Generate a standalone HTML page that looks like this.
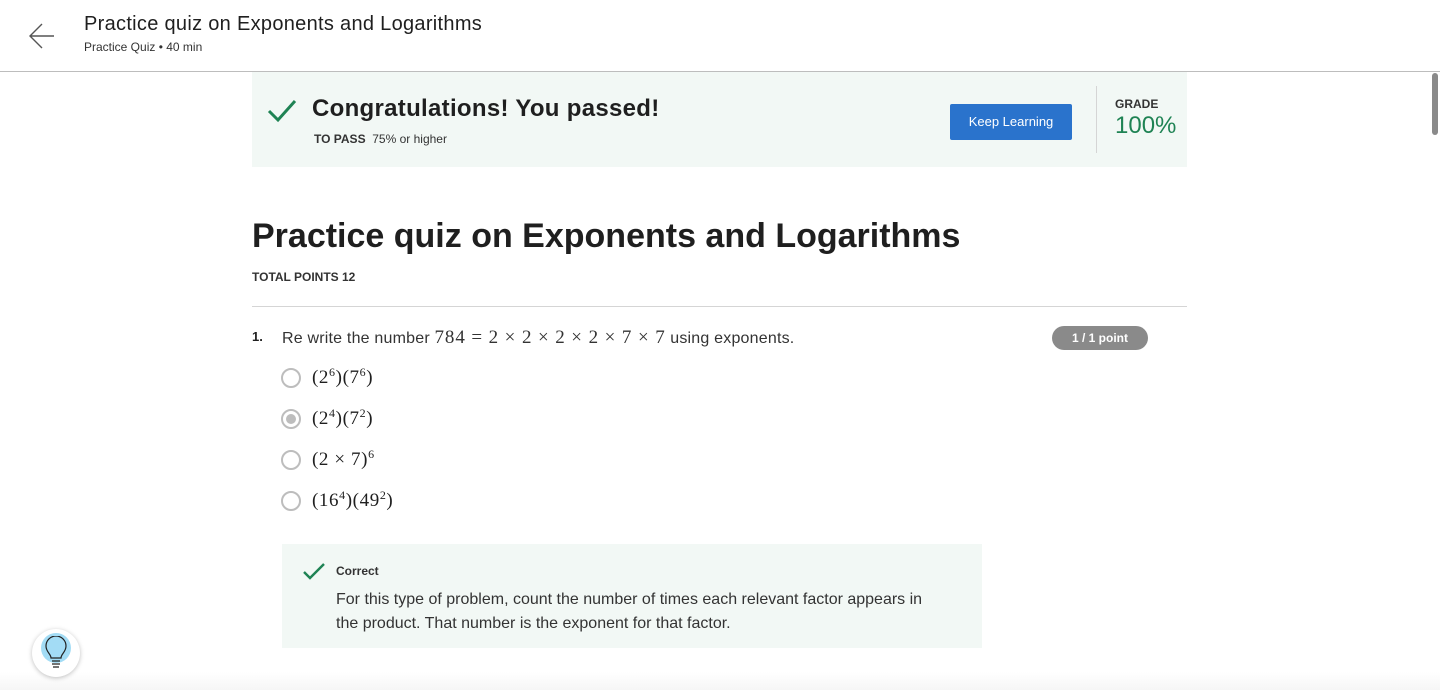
<!DOCTYPE html>
<html><head><meta charset="utf-8"><style>
*{margin:0;padding:0;box-sizing:border-box}
body{width:1440px;height:690px;position:relative;overflow:hidden;background:#fff;font-family:"Liberation Sans",sans-serif;color:#1f1f1f}
.a{position:absolute;white-space:nowrap}
.m{font-family:"Liberation Serif",serif;font-size:19px;letter-spacing:0.6px}
sup{font-size:12px;vertical-align:7px;line-height:0}
.r{position:absolute;left:281px;width:20px;height:20px;border:2px solid #bdbdbd;border-radius:50%;background:#fff}
</style></head><body>
<svg class="a" style="left:28px;top:22px" width="28" height="28" viewBox="0 0 28 28"><path d="M26 14H3M14 2L2 14l12 12" fill="none" stroke="#555" stroke-width="1.4"/></svg>
<div class="a" style="left:84px;top:13px;font-size:20px;color:#1f1f1f;letter-spacing:0.3px">Practice quiz on Exponents and Logarithms</div>
<div class="a" style="left:84px;top:40px;font-size:12px;color:#333">Practice Quiz • 40 min</div>
<div class="a" style="left:0;top:71px;width:1440px;height:1px;background:#bdbdbd"></div>
<div class="a" style="left:1432px;top:73px;width:6px;height:62px;border-radius:3px;background:#8a8a8a"></div>

<div class="a" style="left:252px;top:72px;width:935px;height:95px;background:#f2f8f5"></div>
<svg class="a" style="left:267px;top:98px" width="30" height="26" viewBox="0 0 30 26"><path d="M2 13l9 9L28 3" fill="none" stroke="#1f8354" stroke-width="3"/></svg>
<div class="a" style="left:312px;top:95px;font-size:24px;font-weight:bold;color:#1f1f1f;letter-spacing:0.3px">Congratulations! You passed!</div>
<div class="a" style="left:314px;top:132px;font-size:12px;color:#333"><b>TO PASS</b>&nbsp; 75% or higher</div>
<div class="a" style="left:950px;top:104px;width:122px;height:36px;background:#2a73cc;border-radius:2px;color:#fff;font-size:13px;line-height:36px;text-align:center">Keep Learning</div>
<div class="a" style="left:1096px;top:86px;width:1px;height:67px;background:#d5d5d5"></div>
<div class="a" style="left:1115px;top:97px;font-size:12px;font-weight:bold;color:#333">GRADE</div>
<div class="a" style="left:1115px;top:112px;font-size:24px;color:#1f8354">100%</div>

<div class="a" style="left:252px;top:217px;font-size:34px;font-weight:bold;color:#1f1f1f">Practice quiz on Exponents and Logarithms</div>
<div class="a" style="left:252px;top:270px;font-size:12px;font-weight:bold;color:#333">TOTAL POINTS 12</div>
<div class="a" style="left:252px;top:306px;width:935px;height:1px;background:#d5d5d5"></div>

<div class="a" style="left:252px;top:329px;font-size:13px;font-weight:bold">1.</div>
<div class="a" style="left:282px;top:327px;font-size:16px;color:#333;letter-spacing:0.2px">Re write the number <span class="m" style="letter-spacing:0.9px">784 = 2 × 2 × 2 × 2 × 7 × 7</span> using exponents.</div>
<div class="a" style="left:1052px;top:326px;width:96px;height:24px;border-radius:12px;background:#8a8a8a;color:#fff;font-size:12px;font-weight:bold;line-height:24px;text-align:center">1 / 1 point</div>

<div class="r" style="top:368px"></div>
<div class="a m" style="left:312px;top:367px">(2<sup>6</sup>)(7<sup>6</sup>)</div>
<div class="r" style="top:409px"><div style="position:absolute;left:3px;top:3px;width:10px;height:10px;border-radius:50%;background:#bdbdbd"></div></div>
<div class="a m" style="left:312px;top:408px">(2<sup>4</sup>)(7<sup>2</sup>)</div>
<div class="r" style="top:450px"></div>
<div class="a m" style="left:312px;top:449px">(2 × 7)<sup>6</sup></div>
<div class="r" style="top:491px"></div>
<div class="a m" style="left:312px;top:490px">(16<sup>4</sup>)(49<sup>2</sup>)</div>

<div class="a" style="left:282px;top:544px;width:700px;height:104px;background:#f2f8f5"></div>
<svg class="a" style="left:302px;top:562px" width="24" height="20" viewBox="0 0 24 20"><path d="M2 10l6 6L22 2" fill="none" stroke="#1f8354" stroke-width="2.4"/></svg>
<div class="a" style="left:336px;top:564px;font-size:12px;font-weight:bold;color:#333">Correct</div>
<div class="a" style="left:336px;top:588px;font-size:16px;line-height:24px;color:#333;white-space:normal;width:605px">For this type of problem, count the number of times each relevant factor appears in the product. That number is the exponent for that factor.</div>

<div class="a" style="left:0;top:672px;width:1440px;height:18px;background:linear-gradient(#fff,#f6f6f6)"></div>
<div class="a" style="left:32px;top:629px;width:48px;height:48px;border-radius:50%;background:#fff;box-shadow:0 1px 5px rgba(0,0,0,.25)"></div>
<div class="a" style="left:41px;top:633px;width:30px;height:30px;border-radius:50%;background:#a3dcf5"></div>
<svg class="a" style="left:42px;top:636px" width="28" height="34" viewBox="0 0 28 34"><path d="M9 22c0-4-5-6-5-12a10 10 0 0 1 20 0c0 6-5 8-5 12z" fill="none" stroke="#222" stroke-width="1.2"/><path d="M10 25h8M10 28h8M11 31h6" stroke="#222" stroke-width="1.2"/></svg>
</body></html>
